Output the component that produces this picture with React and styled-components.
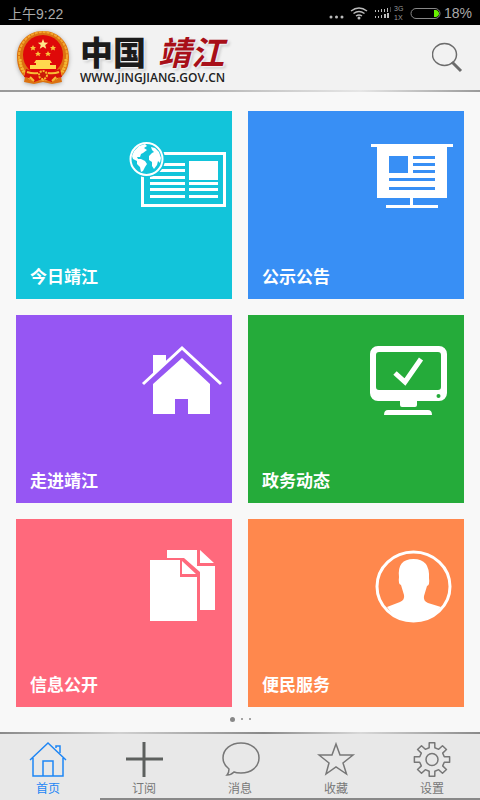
import styled, { createGlobalStyle } from "styled-components";

const GlobalStyle = createGlobalStyle`
  * {
    box-sizing: border-box;
  }

  body {
    margin: 0;
    background: #f8f8f8;
    font-family: "Liberation Sans", "Noto Sans CJK SC", sans-serif;
  }

  a {
    text-decoration: none;
  }
`;

const tiles = [
  { label: "今日靖江", color: "#12c4da", Icon: NewsIcon },
  { label: "公示公告", color: "#388ff5", Icon: BoardIcon },
  { label: "走进靖江", color: "#9656f3", Icon: HouseIcon },
  { label: "政务动态", color: "#25ab3a", Icon: MonitorIcon },
  { label: "信息公开", color: "#ff697c", Icon: PagesIcon },
  { label: "便民服务", color: "#ff884d", Icon: PersonIcon },
];

const tabs = [
  { label: "首页", Icon: HomeTab },
  { label: "订阅", Icon: PlusTab },
  { label: "消息", Icon: ChatTab },
  { label: "收藏", Icon: StarTab },
  { label: "设置", Icon: GearTab },
];

/* tile icons */
function NewsIcon() {
  return (
    <>
      <rect x="22.5" y="23.5" width="82" height="52" fill="none" stroke="#fff" strokeWidth="3" />
      <path d="M30 33h35v3H30zM30 39h35v3H30zM30 46h35v3H30zM30 52h35v3H30zM30 58h35v3H30zM30 65h35v3H30zM69 31h29v19H69zM69 52h29v3H69zM69 58h29v3H69zM69 65h29v3H69z" />
      <circle cx="26.5" cy="29" r="18.5" fill="#12c4da" />
      <circle cx="26.5" cy="29" r="16" fill="#12c4da" stroke="#fff" strokeWidth="2" />
      <path d="M12 26l2-5 5-5 6-2 2 2-3 2 3 2-4 3-2 1-1 3-3 0 1 2 3 0 4 2 2 3-2 3-2 4-2 1-1-5-3-3 0-3-4-2z" />
      <path d="M31 17l4 1 4 4 2 6-1 5-2-2-1 4-3 4-2-3 0-4-3-2 0-4 3-3 2-1-2-2z" />
    </>
  );
}

function BoardIcon() {
  return (
    <path
      fillRule="evenodd"
      d="M19 14h82v3h-6v51H61v7h25v3H34v-3h24v-7H25V17h-6zM37 26h19v17H37zM61 26h22v3H61zM61 33h22v3H61zM61 40h22v3H61zM37 48h46v3H37zM37 57h46v3H37z"
    />
  );
}

function HouseIcon() {
  return (
    <>
      <path d="M33 21h13v7L33 40z" />
      <path d="M23 50L62 14l39 36" fill="none" stroke="#fff" strokeWidth="3" />
      <path d="M62 24l28 26v30H68V65H55v15H33V50z" />
    </>
  );
}

function MonitorIcon() {
  return (
    <>
      <path
        fillRule="evenodd"
        d="M26 12h61a8 8 0 0 1 8 8v39a8 8 0 0 1-8 8H65v4q0 2-2 2H50q-2 0-2-2v-4H26a8 8 0 0 1-8-8V20a8 8 0 0 1 8-8zM27 18q-3 0-3 3v32q0 3 3 3h59q3 0 3-3V21q0-3-3-3z"
      />
      <path d="M36 76h40q4 0 4 5H32q0-5 4-5z" />
      <circle cx="86.5" cy="62" r="2" fill="#25ab3a" />
      <path d="M43 39l10 9 16-23" fill="none" stroke="#fff" strokeWidth="5" />
    </>
  );
}

function PagesIcon() {
  return (
    <path d="M30 22h30v17h17v44H30zM62 23l14 13H62zM47 12h30v16h18v44H80V34L64 20H47zM80 12l14 13H80z" />
  );
}

function PersonIcon() {
  return (
    <>
      <ellipse cx="61.5" cy="48.5" rx="36.5" ry="34.5" fill="none" stroke="#fff" strokeWidth="3" />
      <path d="M35 69l13-5q5-2 4-7l-3-10q-3-1-2-8Q45 21 61.500 21T77 40q1 7-2 8l-3 10q-1 5 4 7l13 4Q79 83 61.500 83T35 69z" />
    </>
  );
}

/* bottom bar icons */
function HomeTab() {
  return (
    <>
      <path d="M1 19L19 2l18 17M4 17v18h30V17" />
      <path d="M14 35V20h10v15M27 7V5h4v7" />
    </>
  );
}

function PlusTab() {
  return <path d="M1 18h37M19 1v35" strokeWidth="3" stroke="#5d605e" />;
}

function ChatTab() {
  return (
    <path d="M20 2c10 0 18 6 18 15s-8 15-18 15c-3 0-5 0-7-1-2 2-5 3-7 3 2-2 2-4 2-6-4-3-6-7-6-11C2 8 10 2 20 2z" />
  );
}

function StarTab() {
  return <path d="M19 3l4 11h13l-10 8 3.500 11L19 26 9 33l3-11-10-8h13z" />;
}

// eight teeth, four corners for each: valley, tip, tip, valley
const gearPoints = Array.from({ length: 8 }, (_, i) =>
  [
    [-13, 12],
    [-9, 17],
    [9, 17],
    [13, 12],
  ].map(([offset, r]) => {
    const a = ((i * 45 + offset) * Math.PI) / 180;
    return `${19 + r * 1.05 * Math.sin(a)},${18.5 - r * Math.cos(a)}`;
  })
)
  .flat()
  .join(" ");

function GearTab() {
  return (
    <>
      <circle cx="19" cy="18.5" r="6" />
      <polygon points={gearPoints} strokeLinejoin="round" />
    </>
  );
}

function Emblem() {
  return (
    <EmblemSvg viewBox="0 0 54 56" aria-hidden="true">
      <path d="M27 1C12 1 1 12 1 27c0 10 4 17 8 20l-1 5 10 2 9-2 9 2 10-2-1-5c4-3 8-10 8-20C53 12 42 1 27 1z" fill="#dc7210" />
      <circle cx="27" cy="26" r="24" fill="none" stroke="#f4a62d" strokeWidth="2" strokeDasharray="3 1" />
      <path d="M4 29c0 9 5 17 12 20M50 29c0 9-5 17-12 20" fill="none" stroke="#f3b933" strokeWidth="3" strokeDasharray="2 1" />
      <circle cx="27" cy="25" r="20" fill="#df0909" />
      <path d="M27 9l1.400 3.500 3.800.2-3 2.400 1 3.700-3.200-2.100-3.200 2.100 1-3.700-3-2.400 3.800-.2z" fill="#ffe98a" />
      <path d="M17 15l1 2 2 0-1.500 1.500.5 2-2-1-2 1 .5-2L14 17l2 0zM37 15l1 2 2 0-1.500 1.500.5 2-2-1-2 1 .5-2L34 17l2 0zM22 21l1 2 2 0-1.500 1.300.5 2-2-1-2 1 .5-2L19 23l2 0zM32 21l1 2 2 0-1.500 1.300.5 2-2-1-2 1 .5-2L29 23l2 0z" fill="#f9c23c" />
      <path d="M20 30h14l2 3h-2v2h6v4H14v-4h6v-2h-2z" fill="#ffd84e" />
      <path d="M10 39q17 7 34 0l2 8q-9 1-10 5l-9-3-9 3q-1-4-10-5z" fill="#d61208" />
      <circle cx="27" cy="45" r="4" fill="#c91b08" stroke="#f7b72b" strokeWidth="2" strokeDasharray="2 1" />
      <path d="M11 42q6 2 11 1M32 43q6 1 11-1M14 47l4 4M40 47l-4 4" fill="none" stroke="#f7bd37" strokeWidth="2" />
    </EmblemSvg>
  );
}

function StatusIcons() {
  return (
    <svg width="116" height="20" viewBox="0 0 116 20" fill="#bbb" aria-hidden="true">
      <circle cx="3" cy="14" r="1.500" />
      <circle cx="8.500" cy="14" r="1.500" />
      <circle cx="14" cy="14" r="1.500" />
      <g fill="none" stroke="#bbb" strokeWidth="1.500">
        <path d="M23 8q8-6 16 0M25.500 10.500q5.500-4 11 0M28 13q3-2 6 0" />
      </g>
      <circle cx="31" cy="15" r="1.500" />
      <path d="M47 7h1v2h-1zM50 7h1v2h-1zM53 6h1v3h-1zM56 6h1v3h-1zM59 5h1v4h-1zM47 13h1v2h-1zM50 13h1v2h-1zM53 12h1v3h-1zM56 11h2v4h-2zM59 10h2v5h-2z" />
      <path d="M62 4h1v5h-1z" fill="#444" />
      <text x="66" y="8" fontSize="7" fill="#999">3G</text>
      <text x="66" y="17" fontSize="7" fill="#999">1X</text>
      <rect x="83" y="5.500" width="29" height="10" rx="5" fill="none" stroke="#888" />
      <path d="M106 7h2q3 1 3 3.500T108 14h-2z" fill="#67f000" />
    </svg>
  );
}

const App = () => {
  return (
    <Page>
      <GlobalStyle />
      <StatusBar>
        <span>上午9:22</span>
        <StatusRight>
          <StatusIcons />
          <span>18%</span>
        </StatusRight>
      </StatusBar>

      <Header>
        <Brand href="#home">
          <Emblem />
          <BrandText>
            <BrandName>
              <b>中国</b>
              <em>靖江</em>
            </BrandName>
            <BrandUrl>WWW.JINGJIANG.GOV.CN</BrandUrl>
          </BrandText>
        </Brand>
        <SearchButton type="button" aria-label="搜索">
          <svg width="32" height="32" viewBox="0 0 32 32" fill="none" stroke="#6c6c6c">
            <ellipse cx="12.500" cy="12.500" rx="12" ry="11" strokeWidth="1.500" />
            <path d="M20 20l9 9" strokeWidth="3" />
          </svg>
        </SearchButton>
      </Header>

      <Main>
        <TileGrid>
          {tiles.map(({ label, color, Icon }) => (
            <Tile key={label} href="#section" $color={color}>
              <TileIcon viewBox="0 0 112 90" aria-hidden="true">
                <Icon />
              </TileIcon>
              <TileLabel>{label}</TileLabel>
            </Tile>
          ))}
        </TileGrid>
        <Pager>
          <Dot $active />
          <Dot />
          <Dot />
        </Pager>
      </Main>

      <TabBar>
        {tabs.map(({ label, Icon }, i) => (
          <Tab key={label} href="#tab" $active={i === 0}>
            <TabIcon viewBox="0 0 39 37" aria-hidden="true">
              <Icon />
            </TabIcon>
            {label}
          </Tab>
        ))}
      </TabBar>
    </Page>
  );
};

const Page = styled.div`
  min-height: 100vh;
  display: flex;
  flex-direction: column;
`;

const StatusBar = styled.div`
  height: 25px;
  padding: 0 8px;
  display: flex;
  justify-content: space-between;
  align-items: center;
  background: #000;
  color: #aaa;
  font-size: 14px;
`;

const StatusRight = styled.div`
  display: flex;
  align-items: center;
`;

const Header = styled.header`
  height: 67px;
  padding: 0 16px;
  display: flex;
  justify-content: space-between;
  align-items: center;
  background: #f2f2f2;
  border-bottom: 2px solid;
  border-image: linear-gradient(to right, #999, #aaa 35%, #e6e6e6 75%, #999) 1;
`;

const Brand = styled.a`
  display: flex;
  align-items: center;
  gap: 10px;
`;

const EmblemSvg = styled.svg`
  width: 54px;
  height: 56px;
  filter: drop-shadow(0 1px 2px #aaa);
`;

const BrandText = styled.div`
  display: flex;
  flex-direction: column;
`;

const BrandName = styled.div`
  display: flex;
  gap: 12px;
  font-family: "Noto Sans CJK SC", sans-serif;
  font-size: 33px;
  font-weight: 700;
  line-height: 40px;
  color: #1b1b1b;
  text-shadow: 1px 1px 2px #fff, 2px 2px 3px #bbb;

  em {
    color: #a80f18;
  }
`;

const BrandUrl = styled.div`
  font-family: "Open Sans", sans-serif;
  font-size: 12px;
  font-weight: 600;
  line-height: 14px;
  color: #222;
`;

const SearchButton = styled.button`
  display: flex;
  padding: 0;
  border: 0;
  background: none;
`;

const Main = styled.main`
  flex: 1;
  padding: 19px 16px 0;
`;

const TileGrid = styled.div`
  display: grid;
  grid-template-columns: 1fr 1fr;
  gap: 16px;
`;

const Tile = styled.a`
  height: 188px;
  padding-top: 19px;
  display: flex;
  flex-direction: column;
  justify-content: space-between;
  background: ${({ $color }) => $color};
  color: #fff;
`;

const TileIcon = styled.svg`
  width: 112px;
  height: 90px;
  align-self: flex-end;
  fill: #fff;
`;

const TileLabel = styled.span`
  padding: 0 14px 11px;
  font-family: "Noto Sans CJK SC", sans-serif;
  font-size: 17px;
  font-weight: 700;
  line-height: 24px;
`;

const Pager = styled.div`
  height: 24px;
  display: flex;
  justify-content: center;
  align-items: center;
  gap: 6px;
`;

const Dot = styled.span`
  width: ${({ $active }) => ($active ? "5px" : "2px")};
  height: ${({ $active }) => ($active ? "5px" : "2px")};
  border-radius: 50%;
  background: #888;
`;

const TabBar = styled.nav`
  display: flex;
  height: 68px;
  padding-top: 7px;
  background: linear-gradient(to right, transparent 100px, #888 100px) bottom / 100% 2px no-repeat, #e8e8e8;
  border-top: 2px solid;
  border-image: linear-gradient(to right, #888, #d0d0d0 25%, #888 55%, #d8d8d8 75%, #888) 1;
`;

const Tab = styled.a`
  flex: 1;
  display: flex;
  flex-direction: column;
  align-items: center;
  gap: 2px;
  font-family: "Noto Sans CJK SC", sans-serif;
  font-size: 12px;
  line-height: 16px;
  color: ${({ $active }) => ($active ? "#1e86f5" : "#777")};
`;

const TabIcon = styled.svg`
  width: 39px;
  height: 37px;
  fill: none;
  stroke: currentColor;
  stroke-width: 1.5;
`;

export default App;
